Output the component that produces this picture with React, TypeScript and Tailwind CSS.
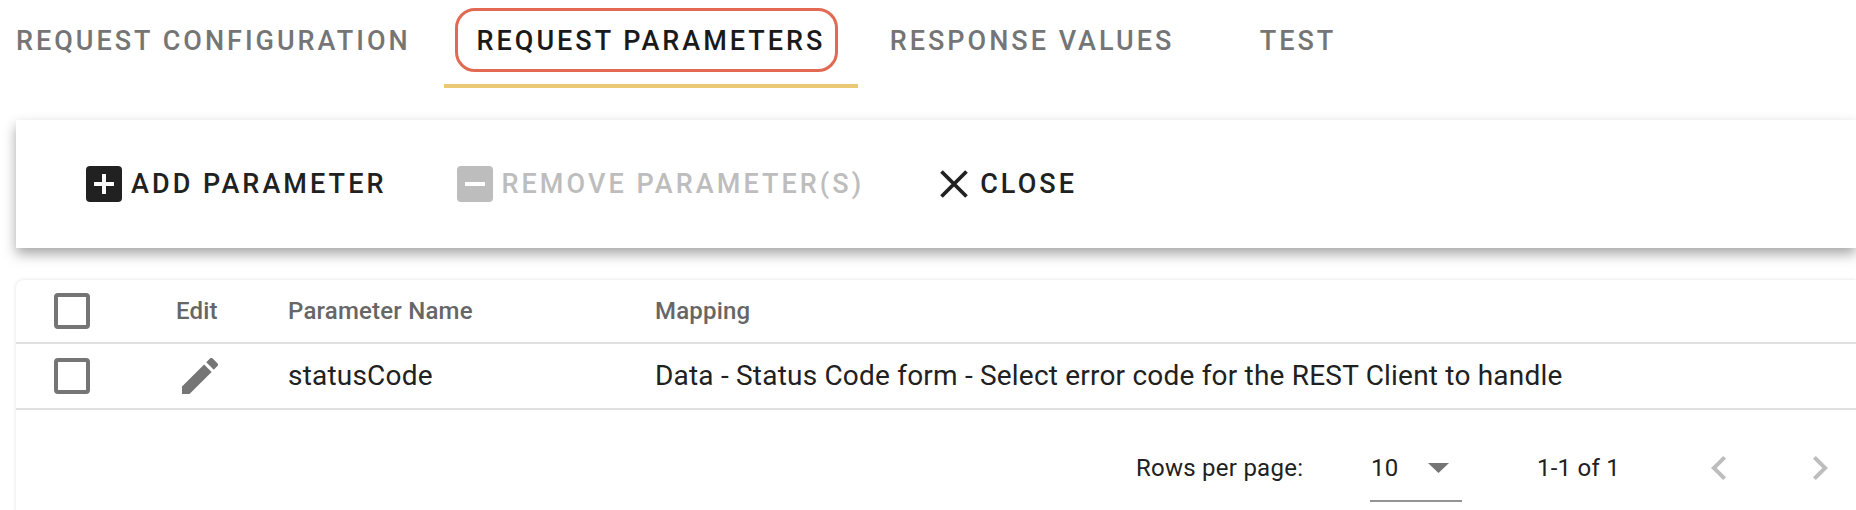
const font = "font-['Roboto',sans-serif]"

const tabs = [
  { label: 'REQUEST CONFIGURATION', className: 'w-[444px] pl-4 text-[#757575]' },
  { label: 'REQUEST PARAMETERS', active: true, className: 'w-[414px] justify-center text-[#1a1a1a]' },
  { label: 'RESPONSE VALUES', className: 'w-[348px] justify-center text-[#757575]' },
  { label: 'TEST', className: 'w-[184px] justify-center text-[#757575]' },
]

function BoxIcon({ minus, color }: { minus?: boolean; color: string }) {
  return (
    <svg viewBox="0 0 36 36" className="h-9 w-9 shrink-0">
      <rect width="36" height="36" rx="4" fill={color} />
      <path d={minus ? 'M8 16h20v4H8z' : 'M16 8h4v8h8v4h-8v8h-4v-8H8v-4h8z'} fill="#fff" />
    </svg>
  )
}

function Checkbox() {
  return <div className="h-9 w-9 rounded-[4px] border-[4px] border-[#757575] bg-white" />
}

function Tabs() {
  return (
    <div className="flex h-[88px] items-start">
      {tabs.map((tab) => (
        <div
          key={tab.label}
          className={`relative flex h-[88px] items-start pt-[22px] text-[27px] font-medium leading-[38px] tracking-[3px] ${tab.className}`}
        >
          {tab.label}
          {tab.active ? (
            <>
              <div className="absolute left-[11px] top-2 h-16 w-[383px] rounded-[20px] border-[3px] border-[#e26a53]" />
              <div className="absolute inset-x-0 bottom-0 h-1 bg-[#ebc874]" />
            </>
          ) : null}
        </div>
      ))}
    </div>
  )
}

function Toolbar() {
  return (
    <div className="ml-4 mt-8 flex h-32 items-center bg-white pl-[70px] text-[27px] font-medium tracking-[3.06px] shadow-[0_6px_12px_rgba(0,0,0,0.35)]">
      <div className="flex items-center gap-[9px] text-[#212121]">
        <BoxIcon color="#212121" />
        ADD PARAMETER
      </div>
      <div className="ml-[70px] flex items-center gap-[9px] text-[#bdbdbd]">
        <BoxIcon minus color="#bdbdbd" />
        REMOVE PARAMETER(S)
      </div>
      <div className="ml-[75px] flex items-center gap-[11px] text-[#212121]">
        <svg viewBox="0 0 30 30" className="h-[30px] w-[30px]">
          <path d="M2.5 2.5l25 25M27.5 2.5l-25 25" stroke="#212121" strokeWidth="3.8" fill="none" />
        </svg>
        CLOSE
      </div>
    </div>
  )
}

function ParameterTable() {
  return (
    <div className="ml-4 mt-8 h-[300px] rounded-tl-lg bg-white shadow-[0_0_4px_rgba(0,0,0,0.12)]">
      <div className="flex h-[64px] items-center border-b-2 border-[#e0e0e0] text-[24px] font-medium tracking-[0.2px] text-[#666666]">
        <div className="w-[160px] pl-[38px]">
          <Checkbox />
        </div>
        <div className="w-[112px]">Edit</div>
        <div className="w-[367px]">Parameter Name</div>
        <div>Mapping</div>
      </div>
      <div className="flex h-[66px] items-center border-b-2 border-[#e0e0e0] text-[28px] tracking-[0.2px] text-[#212121]">
        <div className="w-[160px] pl-[38px]">
          <Checkbox />
        </div>
        <div className="w-[112px] pl-1.5">
          <svg viewBox="3 3 18 18" className="h-9 w-9" fill="#757575">
            <path d="M3 17.25V21h3.75L17.81 9.94l-3.75-3.75L3 17.25zM20.71 7.04a.996.996 0 0 0 0-1.41l-2.34-2.34a.996.996 0 0 0-1.41 0l-1.83 1.83 3.75 3.75 1.83-1.83z" />
          </svg>
        </div>
        <div className="w-[367px]">statusCode</div>
        <div>Data - Status Code form - Select error code for the REST Client to handle</div>
      </div>
      <Pagination />
    </div>
  )
}

function Pagination() {
  return (
    <div className="flex h-[116px] items-center pl-[1120px] text-[24px] tracking-[0.25px] text-[#212121]">
      <span className="w-[234px]">Rows per page:</span>
      <div className="relative flex w-[92px] items-center pl-px">
        10
        <svg viewBox="0 0 21 10" className="ml-[30px] h-2.5 w-[21px]">
          <path d="M0 0h21L10.5 10z" fill="#757575" />
        </svg>
        <div className="absolute inset-x-0 top-[50px] h-0.5 bg-[#949494]" />
      </div>
      <span className="ml-[75px] w-[174px]">1-1 of 1</span>
      <svg viewBox="0 0 16 24" className="h-6 w-4">
        <path d="M15 2.8L12.2 0 0 12l12.2 12 2.8-2.8L5.7 12z" fill="#bdbdbd" />
      </svg>
      <svg viewBox="0 0 16 24" className="ml-[85px] h-6 w-4">
        <path d="M1 2.8L3.8 0 16 12 3.8 24 1 21.2 10.3 12z" fill="#bdbdbd" />
      </svg>
    </div>
  )
}

export default function App() {
  return (
    <div className={`h-[510px] w-[1856px] overflow-hidden bg-white ${font}`}>
      <Tabs />
      <Toolbar />
      <ParameterTable />
    </div>
  )
}
